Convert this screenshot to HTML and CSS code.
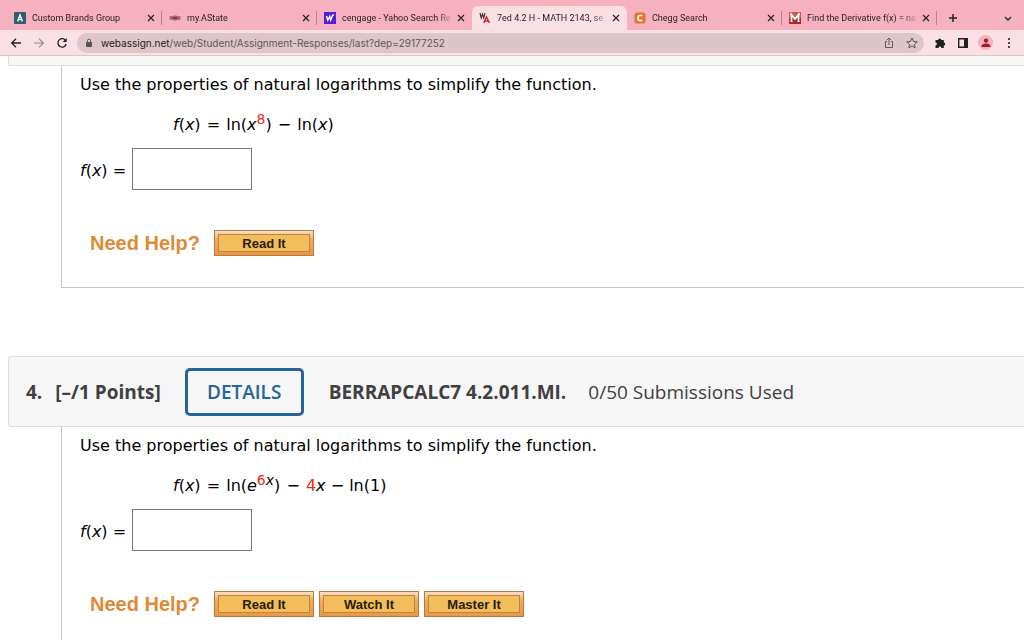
FILE: index.html
```html
<!DOCTYPE html>
<html lang="en">
<head>
<meta charset="utf-8">
<title>7ed 4.2 H - MATH 2143</title>
<link rel="stylesheet" href="styles.css">
</head>
<body>
<header class="browser">
  <nav class="tabs" aria-label="Tabs">
    <div class="tab">
      <svg class="favicon" viewBox="0 0 12 12"><rect width="12" height="12" rx="1" fill="#28606c"/><path d="M3.6 9.5 6 3l2.4 6.5M4.4 7.6h3.2" fill="none" stroke="#fff" stroke-width="1.4"/></svg>
      <a class="title" href="#">Custom Brands Group</a>
      <button class="close" aria-label="Close tab"><svg viewBox="0 0 8 8"><path d="m1 1 6 6M7 1 1 7"/></svg></button>
    </div>
    <div class="tab">
      <svg class="favicon" viewBox="0 0 12 12"><path d="M.5 4.500h3l1-1h3l1 1h3v3h-3l-1 1h-3l-1-1h-3z" fill="#b8646c"/><path d="M1 4.500h2.500M8.500 4.500H11M1 7.500h2.500M8.500 7.500H11" stroke="#777" stroke-width=".8"/><path d="M3.500 6h5" stroke="#7a2a33" stroke-width="1.500"/></svg>
      <a class="title" href="#">my.AState</a>
      <button class="close" aria-label="Close tab"><svg viewBox="0 0 8 8"><path d="m1 1 6 6M7 1 1 7"/></svg></button>
    </div>
    <div class="tab plain">
      <svg class="favicon" viewBox="0 0 12 12"><path d="M0 0h12v12H0z" fill="#5120cf"/><path d="m2.500 4 1.300 4 1.900-3.500 1 3.500 2-5" fill="none" stroke="#fff" stroke-width="1.500"/><path d="M8.200 3h1.900" stroke="#fff" stroke-width="1.300"/></svg>
      <a class="title" href="#">cengage - Yahoo Search Re</a>
      <button class="close" aria-label="Close tab"><svg viewBox="0 0 8 8"><path d="m1 1 6 6M7 1 1 7"/></svg></button>
    </div>
    <div class="tab active">
      <svg class="favicon" viewBox="0 0 12 12"><path d="m1 1 1.200 5L3.500 2l1.300 4L6 1" fill="none" stroke="#3d3030" stroke-width="1.100"/><path d="m4.800 11 2.700-6 3 6M6 9h4" fill="none" stroke="#c3302c" stroke-width="1.600"/></svg>
      <a class="title" href="#">7ed 4.2 H - MATH 2143, se</a>
      <button class="close" aria-label="Close tab"><svg viewBox="0 0 8 8"><path d="m1 1 6 6M7 1 1 7"/></svg></button>
    </div>
    <div class="tab">
      <svg class="favicon" viewBox="0 0 12 12"><rect x=".5" y=".5" width="11" height="11" rx="2.500" fill="#e0742a"/><path d="M8.500 3.500H5.800Q4 3.500 4 5.300v1.400Q4 8.500 5.800 8.500h2.700" fill="none" stroke="#fff" stroke-width="1.500"/></svg>
      <a class="title" href="#">Chegg Search</a>
      <button class="close" aria-label="Close tab"><svg viewBox="0 0 8 8"><path d="m1 1 6 6M7 1 1 7"/></svg></button>
    </div>
    <div class="tab">
      <svg class="favicon" viewBox="0 0 12 12"><path d="M0 0h12v6H0z" fill="#d4574f"/><path d="M0 6h12v6H0z" fill="#ae2a27"/><path d="M2.500 9.500v-7L6 7l3.500-4.500v7" fill="none" stroke="#fff" stroke-width="1.700"/><path d="M1 2.500h2M9 2.500h2M1.500 9.500h2M8.500 9.500h2" stroke="#fff"/></svg>
      <a class="title" href="#">Find the Derivative f(x) = na</a>
      <button class="close" aria-label="Close tab"><svg viewBox="0 0 8 8"><path d="m1 1 6 6M7 1 1 7"/></svg></button>
    </div>
    <button class="icon new-tab" aria-label="New tab"><svg viewBox="0 0 14 14"><path d="M7 3v8M3 7h8" fill="none" stroke="#222" stroke-width="1.500"/></svg></button>
    <button class="icon tab-menu" aria-label="Search tabs"><svg viewBox="0 0 14 14"><path d="m4 6 3 3 3-3" fill="none" stroke="#222" stroke-width="1.300"/></svg></button>
  </nav>
  <div class="toolbar">
    <div class="nav">
      <button class="icon" aria-label="Back"><svg viewBox="0 0 14 14"><path d="M12 7H3M7 2.700 2.700 7 7 11.300" fill="none" stroke="#222" stroke-width="1.300"/></svg></button>
      <button class="icon" aria-label="Forward"><svg viewBox="0 0 14 14"><path d="M2 7h9M7 2.700 11.300 7 7 11.300" fill="none" stroke="#98868a" stroke-width="1.100"/></svg></button>
      <button class="icon" aria-label="Reload"><svg viewBox="0 0 14 14"><path d="M10.800 4.800A4.200 4.200 0 1 0 11.200 8" fill="none" stroke="#222" stroke-width="1.300"/><path d="M11.700 2v4H7.700z" fill="#222"/></svg></button>
    </div>
    <div class="address">
      <svg class="lock" viewBox="0 0 8 10"><rect x="1" y="4" width="6" height="5" rx=".7" fill="#555"/><path d="M2.500 4V2.600a1.500 1.500 0 0 1 3 0V4" fill="none" stroke="#555"/></svg>
      <a class="url" href="#"><span class="host">webassign.net</span>/web/Student/Assignment-Responses/last?dep=29177252</a>
      <button class="icon" aria-label="Share"><svg viewBox="0 0 14 14"><path d="M5 5.500H3.500v6h7v-6H9M7 9V2M5 4l2-2 2 2" fill="none" stroke="#665b5e"/></svg></button>
      <button class="icon" aria-label="Bookmark"><svg viewBox="0 0 14 14"><path d="m7 2 1.500 3.400 3.700.4-2.800 2.400.8 3.600L7 9.900l-3.200 1.900.8-3.600-2.800-2.400 3.700-.4z" fill="none" stroke="#555"/></svg></button>
    </div>
    <div class="tools">
      <button class="icon" aria-label="Extensions"><svg viewBox="0 0 14 14"><path d="M2.500 4h2.700a1.600 1.600 0 1 1 3.200 0h2.400v2.500a1.500 1.500 0 1 1 0 3V12H8.300a1.400 1.400 0 0 0-2.800 0h-3V9.300a1.400 1.400 0 0 0 0-2.800z" fill="#202124"/></svg></button>
      <button class="icon" aria-label="Side panel"><svg viewBox="0 0 14 14"><path d="M2.700 2.700h8.600v8.600H2.700z" fill="none" stroke="#202124" stroke-width="1.400"/><path d="M8 2.500h3.500v9H8z" fill="#202124"/></svg></button>
      <button class="icon profile" aria-label="Profile"><svg viewBox="0 0 14 14"><circle cx="7" cy="4.600" r="2.200" fill="#a31c24"/><path d="M2.500 11V9.600Q3.500 7.600 7 7.600t4.500 2V11z" fill="#a31c24"/></svg></button>
      <button class="icon" aria-label="Menu"><svg viewBox="0 0 14 14"><g fill="#222"><circle cx="7" cy="3" r="1.100"/><circle cx="7" cy="7" r="1.100"/><circle cx="7" cy="11" r="1.100"/></g></svg></button>
    </div>
  </div>
</header>
<main class="assignment">
  <div class="previous-header"></div>
  <section class="question complete">
    <p class="prompt">Use the properties of natural logarithms to simplify the function.</p>
    <p class="formula"><i>f</i>(<i>x</i>) <span class="op">=</span> ln(<i>x</i><sup class="red">8</sup>) <span class="op">−</span> ln(<i>x</i>)</p>
    <div class="answer"><label for="answer3"><i>f</i>(<i>x</i>) =</label><input class="box" id="answer3" type="text"></div>
    <div class="help"><span class="help-title">Need Help?</span><button class="help-button">Read It</button></div>
  </section>
  <div class="question-header">
    <span class="points"><span>4.</span><span>[–/1 Points]</span></span>
    <button class="details">DETAILS</button>
    <strong class="code">BERRAPCALC7 4.2.011.MI.</strong>
    <span class="used">0/50 Submissions Used</span>
  </div>
  <section class="question">
    <p class="prompt">Use the properties of natural logarithms to simplify the function.</p>
    <p class="formula"><i>f</i>(<i>x</i>) <span class="op">=</span> ln(<i>e</i><sup><span class="red">6</span><i>x</i></sup>) <span class="op">−</span> <span class="red">4</span><i>x</i> − ln(1)</p>
    <div class="answer"><label for="answer4"><i>f</i>(<i>x</i>) =</label><input class="box" id="answer4" type="text"></div>
    <div class="help"><span class="help-title">Need Help?</span><button class="help-button">Read It</button><button class="help-button">Watch It</button><button class="help-button">Master It</button></div>
  </section>
</main>
</body>
</html>
```

FILE: styles.css
```css
* { box-sizing: border-box; }
html, body { height: 100%; }
body { margin: 0; background: #fff; display: flex; flex-direction: column; overflow: hidden; }
button { font: inherit; cursor: pointer; }
a { color: inherit; text-decoration: none; }

.browser { flex: none; font-family: Inter, sans-serif; color: #2b2024; }
.tabs { display: flex; height: 30px; padding: 6px 9px 0 7px; background: #f5b1c0; }
.tab { flex: 0 1 155px; min-width: 0; display: flex; align-items: center; padding: 0 6px 0 7px; border-radius: 6px 6px 0 0; position: relative; font-family: Roboto, sans-serif; font-size: 9px; }
.tab::after { content: ""; width: 1px; height: 14px; background: #b98490; position: absolute; right: 0; top: 5px; }
.tab.plain::after, .tab.active::after { display: none; }
.tab.active { background: #fae0e5; }
.favicon { flex: none; width: 12px; height: 12px; margin-right: 6px; }
.title { flex: 1; min-width: 0; overflow: hidden; white-space: nowrap; line-height: 14px; mask-image: linear-gradient(to right, #000 86%, transparent); }
.close { flex: none; width: 10px; height: 14px; padding: 1px; margin-left: 3px; border: 0; background: none; display: grid; place-items: center; }
.close svg { width: 8px; height: 8px; fill: none; stroke: #2b2024; stroke-width: 1.2; }
.icon { flex: none; width: 15px; height: 15px; padding: 0; border: 0; background: none; display: grid; place-items: center; }
.icon svg { width: 14px; height: 14px; }
.new-tab { margin: 4px 0 0 8px; }
.tab-menu { margin: 4px 0 0 auto; }
.toolbar { display: flex; align-items: center; height: 26px; padding: 0 8px; background: #fae0e5; border-bottom: 1px solid #e0c4ca; }
.nav { display: flex; gap: 8px; width: 69px; }
.address { flex: 1; min-width: 0; height: 20px; display: flex; align-items: center; gap: 8px; padding: 0 5px 0 8px; border-radius: 10px; background: #dcc6ca; }
.lock { flex: none; width: 8px; height: 10px; }
.url { flex: 1; min-width: 0; overflow: hidden; white-space: nowrap; font-size: 10px; line-height: 16px; color: #62575a; }
.host { color: #252022; }
.tools { display: flex; gap: 8px; margin-left: 8px; }
.profile { border-radius: 50%; background: #f5b1c0; }

.assignment { flex: 1; min-height: 0; overflow: hidden; padding-left: 8px; font-family: Verdana, "DejaVu Sans", sans-serif; font-size: 16px; line-height: 20px; color: #000; }
.previous-header { height: 10px; background: #f6f6f6; border: solid #dfdfdf; border-width: 0 0 1px 1px; }
.question { margin-left: 53px; padding: 9px 0 31px 18px; border-left: 1px solid #c4c4c4; }
.complete { border-bottom: 1px solid #c4c4c4; margin-bottom: 68px; }
.prompt, .formula { margin: 0; }
.formula { margin: 20px 0 13px 93px; }
.op { margin: 0 1px; }
sup { font-size: 14px; line-height: 0; vertical-align: 6px; }
.red { color: #e8291c; }
.answer { display: flex; align-items: center; gap: 6px; }
.answer label { padding-top: 4px; }
.box { width: 120px; height: 42px; padding: 4px; border: 1px solid #767676; background: #fff; font: inherit; }
.help { display: flex; align-items: center; gap: 5px; margin: 40px 0 0 10px; font-family: "Liberation Sans", Arial, sans-serif; font-weight: bold; }
.help-title { margin-right: 9px; font-size: 20px; color: #e08a36; }
.help-button { width: 100px; height: 26px; padding: 4px 2px 2px; border: 1px solid #b67a3c; background: linear-gradient(#f8e0c8, #efaa62 35%, #eb9847); font-size: 13px; line-height: 18px; color: #2a1c08; position: relative; z-index: 0; }
.help-button::before { content: ""; position: absolute; inset: 3px; z-index: -1; border: 1px solid #bd8540; background: #f3bd5c; }
.question-header { display: flex; align-items: center; height: 71px; padding-left: 17px; border: 1px solid #dfdfdf; border-right: 0; border-radius: 3px 0 0 3px; background: #f6f6f6; font-family: "Open Sans", sans-serif; font-size: 19px; line-height: 26px; color: #404040; white-space: nowrap; }
.points { display: flex; gap: 13px; font-weight: bold; }
.details { width: 119px; height: 48px; margin: 0 25px 0 24px; padding: 0; border: 3px solid #276497; border-radius: 5px; background: #f6f6f6; color: #276497; font-weight: 600; }
.used { margin-left: 22px; }
```
